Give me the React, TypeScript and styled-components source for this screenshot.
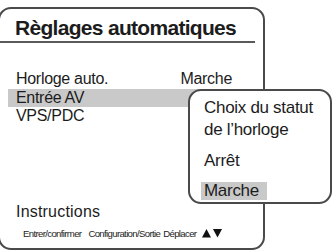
import styled, { createGlobalStyle } from "styled-components";

const GlobalStyle = createGlobalStyle`
    html, body {
        margin: 0;
        padding: 0;
        background: #ffffff;
        overflow: hidden;
    }

    body {
        font-family: "Liberation Sans", Arial, sans-serif;
        color: #1c1c1c;
    }
`

const Screen = styled.div`
    position: relative;
    width: 334px;
    height: 251px;
    padding-top: 7px;
    box-sizing: border-box;
`

const Panel = styled.div`
    margin-left: -2px;
    width: 267px;
    height: 243px;
    box-sizing: border-box;
    border: 2px solid #4a4a4a;
    border-radius: 13px;
    display: flex;
    flex-direction: column;
`

const Title = styled.h1`
    margin: 0 8px 0 0;
    padding: 5px 0 0 15px;
    font-size: 21px;
    line-height: 27px;
    font-weight: 700;
    letter-spacing: -0.7px;
    white-space: nowrap;
    border-bottom: 2px solid #5a5a5a;
`

const List = styled.div`
    margin: 27.2px 16px 0 8px;
    display: flex;
    flex-direction: column;
`

const Row = styled.div<{ $active?: boolean }>`
    display: flex;
    justify-content: space-between;
    height: 18.5px;
    padding: 0 15px 0 8px;
    font-size: 16px;
    line-height: 18.5px;
    letter-spacing: -0.3px;
    white-space: nowrap;
    background: ${p => p.$active ? "#c9c9c9" : "transparent"};
`

const Footer = styled.div`
    margin-top: auto;
    padding: 0 0 7.5px 16px;
`

const Instructions = styled.div`
    font-size: 16px;
    line-height: 18px;
    letter-spacing: 0.2px;
`

const Hints = styled.div`
    margin-top: 6px;
    padding-left: 7px;
    display: flex;
    align-items: center;
    font-size: 9.6px;
    line-height: 14px;
    letter-spacing: -0.65px;
    white-space: nowrap;
`

const Hint = styled.span<{ $gap: number }>`
    margin-right: ${p => p.$gap}px;
`

const Arrows = styled.svg`
    display: block;
    width: 20px;
    height: 8.5px;
`

const Popup = styled.div`
    position: absolute;
    left: 188px;
    top: 89px;
    width: 144px;
    box-sizing: border-box;
    border: 2px solid #4a4a4a;
    border-radius: 13px;
    background: #ffffff;
    padding: 5.5px 0 2px 11px;
    font-size: 17px;
    letter-spacing: -0.3px;
    white-space: nowrap;
`

const PopupHeading = styled.div`
    padding-left: 3px;
    line-height: 22px;
`

const Option = styled.div<{ $active?: boolean; $gap: number }>`
    display: inline-block;
    vertical-align: top;
    margin-top: ${p => p.$gap}px;
    padding: 0 8px 0 3px;
    line-height: 18px;
    background: ${p => p.$active ? "#c9c9c9" : "transparent"};
`

const OptionRow = styled.div`
    display: flex;
`

export default function App() {
    return (
        <>
            <GlobalStyle/>
            <Screen>
                <Panel>
                    <Title>Règlages automatiques</Title>
                    <List>
                        <Row><span>Horloge auto.</span><span>Marche</span></Row>
                        <Row $active><span>Entrée AV</span></Row>
                        <Row><span>VPS/PDC</span></Row>
                    </List>
                    <Footer>
                        <Instructions>Instructions</Instructions>
                        <Hints>
                            <Hint $gap={7}>Entrer/confirmer</Hint>
                            <Hint $gap={3}>Configuration/Sortie</Hint>
                            <Hint $gap={6}>Déplacer</Hint>
                            <Arrows viewBox="0 0 20 8.5">
                                <polygon points="0,8.5 4.5,0 9,8.5" fill="#111"/>
                                <polygon points="11,0 20,0 15.5,8.5" fill="#111"/>
                            </Arrows>
                        </Hints>
                    </Footer>
                </Panel>
                <Popup>
                    <PopupHeading>Choix du statut<br/>de l’horloge</PopupHeading>
                    <OptionRow><Option $gap={11}>Arrêt</Option></OptionRow>
                    <OptionRow><Option $gap={12} $active>Marche</Option></OptionRow>
                </Popup>
            </Screen>
        </>
    )
}
